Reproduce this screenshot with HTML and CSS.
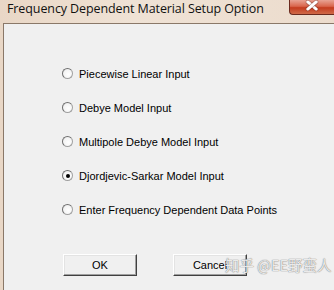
FILE: index.html
```html
<!DOCTYPE html>
<html>
<head>
<meta charset="utf-8">
<link rel="stylesheet" href="styles.css">
</head>
<body>
<div class="window">
  <div class="titlebar">
    <span class="title">Frequency Dependent Material Setup Option</span>
    <div class="close"><span class="x-mark"></span></div>
  </div>
  <div class="frame">
    <div class="client">
      <div class="options">
        <label class="opt"><span class="radio"></span><span>Piecewise Linear Input</span></label>
        <label class="opt"><span class="radio"></span><span>Debye Model Input</span></label>
        <label class="opt"><span class="radio"></span><span>Multipole Debye Model Input</span></label>
        <label class="opt"><span class="radio checked"></span><span>Djordjevic-Sarkar Model Input</span></label>
        <label class="opt"><span class="radio"></span><span>Enter Frequency Dependent Data Points</span></label>
      </div>
      <div class="buttons">
        <div class="btn">OK</div>
        <div class="btn">Cancel</div>
      </div>
      <div class="watermark">知乎 @EE野蛮人</div>
    </div>
  </div>
</div>
</body>
</html>
```

FILE: styles.css
```css
html, body {
  margin: 0;
  padding: 0;
}
body {
  width: 334px;
  height: 290px;
  overflow: hidden;
  background: #f0f0f0;
}
.window {
  width: 334px;
  height: 290px;
  display: flex;
  flex-direction: column;
  background: linear-gradient(90deg, #e9d7c6 0%, #efe2d5 40%, #ecdccd 100%);
}
.titlebar {
  height: 23px;
  flex: none;
  display: flex;
  align-items: flex-start;
  justify-content: space-between;
}
.title {
  font-family: "Open Sans", "Noto Sans", sans-serif;
  font-size: 12.5px;
  color: #111;
  margin: 1px 0 0 7px;
  line-height: 16px;
  letter-spacing: -0.1px;
}
.close {
  width: 45px;
  height: 15px;
  flex: none;
  margin-left: auto;
  box-sizing: border-box;
  border: 1px solid #6b2a1e;
  border-top: none;
  border-right: none;
  border-radius: 0 0 0 4px;
  background: linear-gradient(180deg, #e8a293 0%, #d9664d 45%, #c43c1f 55%, #cf6a48 100%);
  display: flex;
  justify-content: center;
}
.x-mark {
  position: relative;
  width: 12px;
  height: 10px;
  margin-top: 0;
}
.x-mark::before,
.x-mark::after {
  content: "";
  position: absolute;
  left: -1px;
  top: 4px;
  width: 14px;
  height: 3px;
  border-radius: 1.5px;
  background: #ffffff;
  box-shadow: 0 0 1px 0.5px rgba(90, 26, 16, 0.55);
}
.x-mark::before {
  transform: rotate(40deg);
}
.x-mark::after {
  transform: rotate(-40deg);
}
.frame {
  flex: 1;
  padding-left: 3px;
  display: flex;
}
.client {
  flex: 1;
  background: #f0f0f0;
  border-top: 1px solid #8a7868;
  border-left: 1px solid #8a7868;
  position: relative;
  font-family: Tahoma, "Liberation Sans", sans-serif;
  font-size: 11px;
  color: #000;
}
.options {
  display: flex;
  flex-direction: column;
  gap: 21px;
  padding: 43px 0 0 58px;
}
.opt {
  display: flex;
  align-items: center;
  height: 13px;
  gap: 6px;
}
.radio {
  width: 11px;
  height: 11px;
  box-sizing: border-box;
  border-radius: 50%;
  border: 1px solid #a0a0a0;
  background: radial-gradient(circle at 60% 60%, #ffffff 0%, #f4f4f4 60%, #dcdcdc 100%);
  border-left-color: #6f6f6f;
  border-top-color: #6f6f6f;
  position: relative;
}
.radio.checked::after {
  content: "";
  position: absolute;
  left: 2.5px;
  top: 2.5px;
  width: 4px;
  height: 4px;
  border-radius: 50%;
  background: #000;
}
.buttons {
  display: flex;
  gap: 36px;
  padding: 38px 0 0 59px;
}
.btn {
  width: 74px;
  height: 22px;
  box-sizing: border-box;
  border: 1px solid;
  border-color: #ffffff #404040 #404040 #ffffff;
  box-shadow: inset -1px -1px 0 #a0a0a0, inset 1px 1px 0 #e3e3e3;
  background: #f0f0f0;
  display: flex;
  align-items: center;
  justify-content: center;
  font-size: 11px;
}
.watermark {
  position: absolute;
  left: 221px;
  top: 232px;
  white-space: nowrap;
  font-family: "Noto Sans CJK SC", sans-serif;
  font-size: 14.5px;
  line-height: 18px;
  color: rgba(255,255,255,0.85);
  text-shadow: 0 0 1px rgba(110,110,110,0.8), 0 0 1px rgba(110,110,110,0.8);
}
```
